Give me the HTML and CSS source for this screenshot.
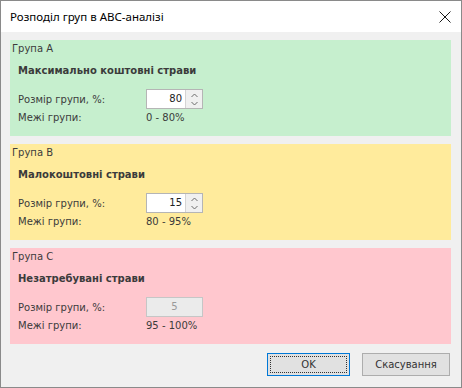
FILE: index.html
```html
<!DOCTYPE html>
<html lang="uk">
<head>
<meta charset="utf-8">
<link rel="stylesheet" href="styles.css">
</head>
<body>
<div class="window">
  <div class="titlebar">
    <span class="title">Розподіл груп в АВС-аналізі</span>
    <svg class="close" width="12" height="12" viewBox="0 0 12 12"><path d="M0.5 0.5 L11.5 11.5 M11.5 0.5 L0.5 11.5" stroke="#1a1a1a" stroke-width="1" fill="none"/></svg>
  </div>
  <div class="content">
    <section class="group group-a">
      <div class="group-label">Група А</div>
      <div class="group-title">Максимально коштовні страви</div>
      <div class="row">
        <span class="label">Розмір групи, %:</span>
        <div class="spin">
          <span class="spin-value">80</span>
          <span class="spin-btns">
            <svg width="7" height="5" viewBox="0 0 7 5"><path d="M0.5 4 L3.5 1 L6.5 4" stroke="#6d6d6d" fill="none"/></svg>
            <svg width="7" height="5" viewBox="0 0 7 5"><path d="M0.5 1 L3.5 4 L6.5 1" stroke="#6d6d6d" fill="none"/></svg>
          </span>
        </div>
      </div>
      <div class="row-text">
        <span class="label">Межі групи:</span>
        <span>0 - 80%</span>
      </div>
    </section>
    <section class="group group-b">
      <div class="group-label">Група В</div>
      <div class="group-title">Малокоштовні страви</div>
      <div class="row">
        <span class="label">Розмір групи, %:</span>
        <div class="spin">
          <span class="spin-value">15</span>
          <span class="spin-btns">
            <svg width="7" height="5" viewBox="0 0 7 5"><path d="M0.5 4 L3.5 1 L6.5 4" stroke="#6d6d6d" fill="none"/></svg>
            <svg width="7" height="5" viewBox="0 0 7 5"><path d="M0.5 1 L3.5 4 L6.5 1" stroke="#6d6d6d" fill="none"/></svg>
          </span>
        </div>
      </div>
      <div class="row-text">
        <span class="label">Межі групи:</span>
        <span>80 - 95%</span>
      </div>
    </section>
    <section class="group group-c">
      <div class="group-label">Група С</div>
      <div class="group-title">Незатребувані страви</div>
      <div class="row">
        <span class="label">Розмір групи, %:</span>
        <div class="spin disabled">
          <span class="spin-value">5</span>
        </div>
      </div>
      <div class="row-text">
        <span class="label">Межі групи:</span>
        <span>95 - 100%</span>
      </div>
    </section>
    <div class="buttons">
      <button class="btn btn-default"><span class="focus">OK</span></button>
      <button class="btn">Скасування</button>
    </div>
  </div>
</div>
</body>
</html>
```

FILE: styles.css
```css
* { box-sizing: border-box; }
html, body { margin: 0; padding: 0; background: #ffffff; }
body { width: 462px; height: 388px; overflow: hidden; }

.window {
  width: 462px;
  height: 388px;
  border: 1px solid #8a8a8a;
  background: #f0f0f0;
  display: flex;
  flex-direction: column;
}

.titlebar {
  height: 31px;
  background: #ffffff;
  display: flex;
  align-items: center;
  justify-content: space-between;
  padding: 0 10px 0 9px;
  flex: none;
}
.title {
  font-family: "Noto Sans", sans-serif;
  font-size: 11.5px;
  color: #000;
  margin-top: -1px;
}
.close { margin-top: 0; }

.content {
  padding: 8px 10px 0 9px;
  display: flex;
  flex-direction: column;
  gap: 8px;
  font-family: "DejaVu Sans", sans-serif;
  font-size: 10px;
  color: #3b3b3b;
}

.group {
  height: 96px;
  padding: 2px 0 0 2px;
  display: flex;
  flex-direction: column;
}
.group-a { background: #c6efce; }
.group-b { background: #ffeb9c; }
.group-c { background: #ffc7ce; }

.group-label { line-height: 14px; height: 14px; }
.group-title {
  font-weight: bold;
  line-height: 14px;
  margin: 8px 0 0 6px;
}
.row {
  display: flex;
  align-items: center;
  height: 20px;
  margin: 11px 0 0 6px;
}
.row-text {
  display: flex;
  line-height: 14px;
  margin: 2px 0 0 6px;
}
.label { width: 128px; flex: none; }

.spin {
  width: 57px;
  height: 20px;
  background: #ffffff;
  border: 1px solid #b5b5b5;
  display: flex;
  align-items: stretch;
}
.spin-value {
  flex: 1;
  text-align: right;
  padding-right: 3px;
  line-height: 18px;
  color: #222;
}
.spin-btns {
  width: 17px;
  background: #f0f0f0;
  border-left: 1px solid #d4d4d4;
  display: flex;
  flex-direction: column;
  align-items: center;
  justify-content: center;
  gap: 3px;
}
.spin-btns svg { display: block; }
.spin.disabled {
  background: #ebebeb;
  border-color: #c6c6c6;
}
.spin.disabled .spin-value {
  text-align: center;
  padding: 0;
  color: #9a9a9a;
}

.buttons {
  display: flex;
  justify-content: flex-end;
  gap: 12px;
  margin-top: 1px;
  padding-right: 1px;
}
.btn {
  height: 23px;
  font-family: "DejaVu Sans", sans-serif;
  font-size: 10px;
  color: #333;
  background: #e1e1e1;
  border: 1px solid #adadad;
  padding: 0;
  width: 88px;
}
.btn-default {
  width: 83px;
  border-color: #0078d7;
  padding: 2px;
}
.focus {
  display: flex;
  align-items: center;
  justify-content: center;
  height: 100%;
  border: 1px dotted #333;
}
```
